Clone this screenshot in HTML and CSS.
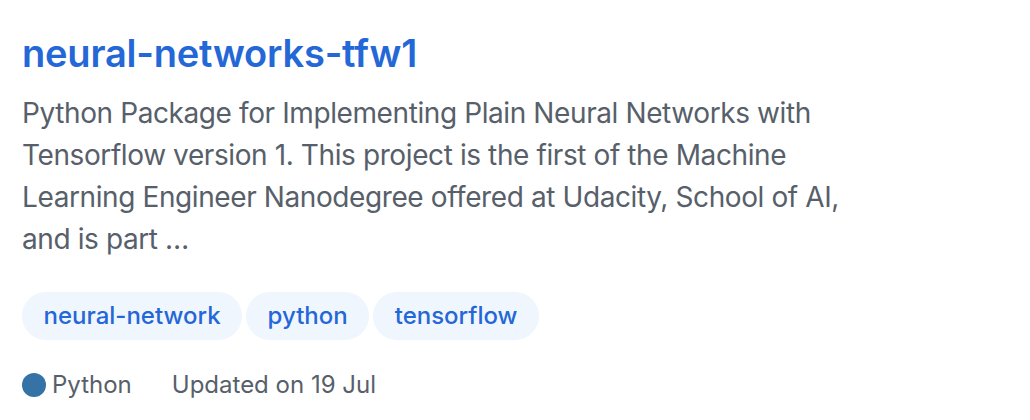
FILE: index.html
```html
<!DOCTYPE html>
<html lang="en">
<head>
<meta charset="utf-8">
<title>neural-networks-tfw1</title>
<link rel="stylesheet" href="styles.css">
</head>
<body>
<div class="repo">
  <h3 class="repo-title"><a href="#">neural-networks-tfw1</a></h3>
  <p class="repo-desc">Python Package for Implementing Plain Neural Networks with Tensorflow version 1. This project is the first of the Machine Learning Engineer Nanodegree offered at Udacity, School of AI, and is part …</p>
  <div class="topics">
    <a class="topic" href="#">neural-network</a>
    <a class="topic" href="#">python</a>
    <a class="topic" href="#">tensorflow</a>
  </div>
  <div class="meta">
    <span class="lang"><span class="lang-dot"></span>Python</span>
    <span class="updated">Updated on 19 Jul</span>
  </div>
</div>
</body>
</html>
```
FILE: styles.css
```css
html, body {
  margin: 0;
  padding: 0;
  background: #ffffff;
}
body {
  font-family: Inter, "Noto Sans", "Liberation Sans", sans-serif;
  color: #57606a;
}
.repo {
  padding: 23px 22px 0 22px;
}
.repo-title {
  margin: 0;
  font-size: 38px;
  line-height: 60px;
  font-weight: 600;
  letter-spacing: -0.2px;
}
.repo-title a {
  color: #2467d6;
  text-decoration: none;
}
.repo-desc {
  margin: 9px 0 0 0;
  width: 840px;
  font-size: 28px;
  line-height: 42px;
  letter-spacing: -0.4px;
  color: #57606a;
}
.topics {
  display: flex;
  gap: 4px;
  margin-top: 32px;
}
.topic {
  display: inline-block;
  height: 48px;
  line-height: 48px;
  padding: 0 21.5px;
  border-radius: 24px;
  background: #f0f6fe;
  color: #2467d6;
  font-size: 24px;
  font-weight: 500;
  text-decoration: none;
}
.meta {
  display: flex;
  align-items: center;
  gap: 40px;
  margin-top: 27px;
  font-size: 24px;
  line-height: 36px;
  color: #57606a;
}
.lang {
  display: flex;
  align-items: center;
  gap: 6px;
}
.lang-dot {
  width: 24px;
  height: 24px;
  border-radius: 50%;
  background: #3572a5;
}
```
